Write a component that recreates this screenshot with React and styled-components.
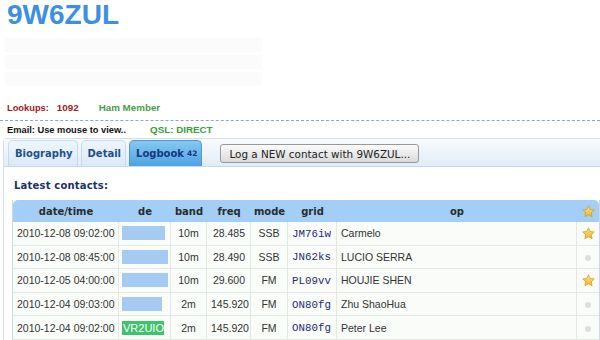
import React from "react";
import styled, { createGlobalStyle } from "styled-components";

const GlobalStyle = createGlobalStyle`
  body {
    margin: 0;
    background: #fff;
    font-family: "Liberation Sans", Arial, sans-serif;
  }
`;

const Page = styled.div`
  width: 600px;
  height: 340px;
  overflow: hidden;
`;

const Head = styled.div`
  padding-left: 7px;
`;

const Call = styled.h1`
  margin: 0;
  font: bold 28px/30px "Liberation Sans", Arial, sans-serif;
  color: #3d8fe4;
`;

const Blurb = styled.div`
  margin: 8px 0 0 -2px;
  width: 257px;
  display: flex;
  flex-direction: column;
  gap: 3px;
`;

const BlurLine = styled.div`
  height: 14px;
  background: #fbfbfc;
`;

const InfoRow = styled.div`
  display: flex;
  align-items: center;
  height: 14px;
  margin-top: ${(p) => p.top || 0}px;
  font: bold 9.3px/14px "Liberation Sans", Arial, sans-serif;
`;

const Label = styled.span`
  color: ${(p) => p.color || "#111"};
  margin-right: ${(p) => p.gap || 0}px;
  font-size: ${(p) => p.size || 9.3}px;
`;

const Divider = styled.div`
  margin-top: 5px;
  border-top: 1px dashed #8ea7c6;
`;

const Widget = styled.div`
  margin: 1px 0 0 3px;
  border: 1px solid #d4e1ec;
  border-right: 0;
  border-radius: 4px 0 0 0;
  height: 220px;
`;

const Nav = styled.div`
  display: flex;
  align-items: flex-end;
  height: 27px;
  padding-left: 4px;
  background: linear-gradient(#f9fbfe, #e1ecf6);
  border-bottom: 1px solid #c3d8ea;
`;

const Tab = styled.div`
  height: 25px;
  margin-right: 3px;
  padding: 0 4px 0 6px;
  display: flex;
  align-items: center;
  border: 1px solid ${(p) => (p.active ? "#4b9ad8" : "#c5dbec")};
  border-bottom: 0;
  border-radius: 5px 5px 0 0;
  background: ${(p) =>
    p.active
      ? "linear-gradient(#86c8f2, #4fa3e2)"
      : "linear-gradient(#eef6fd, #dbeaf8)"};
  color: ${(p) => (p.active ? "#123a7a" : "#1f4f8c")};
  font: bold 10px "DejaVu Sans", Verdana, sans-serif;
`;

const Count = styled.span`
  font-size: 7.5px;
  margin-left: 3px;
`;

const LogButton = styled.button`
  align-self: center;
  margin: 2px 0 0 15px;
  height: 19px;
  padding: 0 8px;
  border: 1px solid #989898;
  border-radius: 3px;
  background: linear-gradient(#fbfbfb, #dadada);
  color: #222;
  font: 10.4px "DejaVu Sans", Verdana, sans-serif;
`;

const Body = styled.div`
  padding: 12px 0 0 8px;
`;

const SubTitle = styled.div`
  height: 14px;
  padding-left: 2px;
  font: bold 10px/14px "DejaVu Sans", Verdana, sans-serif;
  color: #1b2f6b;
  letter-spacing: 0.2px;
`;

const Table = styled.table`
  margin-top: 7px;
  width: 586px;
  table-layout: fixed;
  border-collapse: separate;
  border-spacing: 0;
  border-left: 1px solid #cbd9e6;
  border-right: 1px solid #cbd9e6;
`;

const Th = styled.th`
  height: 22px;
  padding: 0;
  background: #a3cef6;
  color: #2b2b2b;
  font: bold 10px "DejaVu Sans", Verdana, sans-serif;
  text-align: center;
  &:first-child { border-top-left-radius: 5px; }
  &:last-child { border-top-right-radius: 5px; }
`;

const Td = styled.td`
  height: 22.6px;
  padding: 0 ${(p) => (p.align === "right" ? "5px" : "4px")} 0 4px;
  background: #f9fcf9;
  border-bottom: 1px solid #e2e8e2;
  border-right: 1px solid #e2e8e2;
  text-align: ${(p) => p.align || "left"};
  color: #333;
  font: 10.5px "Liberation Sans", Arial, sans-serif;
  white-space: nowrap;
  overflow: hidden;
  &:last-child { border-right: 0; }
`;

const DeCell = styled(Td)`
  padding: 0 3px;
`;

const Grid = styled.span`
  font: 10.8px "Liberation Mono", "Courier New", monospace;
  color: #1f2a78;
`;

const CallBar = styled.div`
  height: 14px;
  width: ${(p) => p.w}px;
  background: ${(p) => (p.green ? "#3ec26c" : "#a5cbf3")};
  color: #fff;
  font: 11px/14px "Liberation Sans", Arial, sans-serif;
  padding-left: 1px;
  box-sizing: border-box;
`;

const Dot = styled.span`
  display: inline-block;
  width: 6px;
  height: 6px;
  border-radius: 50%;
  background: #dedede;
  vertical-align: middle;
`;

const Star = () => (
  <svg width="13" height="13" viewBox="0 0 24 24" style={{ verticalAlign: "middle" }}>
    <defs>
      <linearGradient id="sg" x1="0" y1="0" x2="0" y2="1">
        <stop offset="0" stopColor="#fde58a" />
        <stop offset="1" stopColor="#f0b429" />
      </linearGradient>
    </defs>
    <path
      d="M12 1.5l3.2 6.9 7.4.8-5.5 5 1.6 7.4L12 17.8l-6.7 3.8 1.6-7.4-5.5-5 7.4-.8z"
      fill="url(#sg)"
      stroke="#d39a1c"
      strokeWidth="1.4"
      strokeLinejoin="round"
    />
  </svg>
);

const widths = [106, 52, 36, 44, 37, 49, 240, 22];

const rows = [
  ["2010-12-08 09:02:00", 43, "", "10m", "28.485", "SSB", "JM76iw", "Carmelo", true],
  ["2010-12-08 08:45:00", 46, "", "10m", "28.490", "SSB", "JN62ks", "LUCIO SERRA", false],
  ["2010-12-05 04:00:00", 46, "", "10m", "29.600", "FM", "PL09vv", "HOUJIE SHEN", true],
  ["2010-12-04 09:03:00", 40, "", "2m", "145.920", "FM", "ON80fg", "Zhu ShaoHua", false],
  ["2010-12-04 09:02:00", 42, "VR2UIO", "2m", "145.920", "FM", "ON80fg", "Peter Lee", false],
];

export default function App() {
  return (
    <Page>
      <GlobalStyle />
      <Head>
        <Call>9W6ZUL</Call>
        <Blurb>
          <BlurLine />
          <BlurLine />
          <BlurLine />
        </Blurb>
        <InfoRow top={15}>
          <Label color="#9c1c1c" gap={8}>Lookups:</Label>
          <Label color="#9c1c1c" gap={20} size={9.8}>1092</Label>
          <Label color="#4a9e4a" size={9.8}>Ham Member</Label>
        </InfoRow>
      </Head>
      <Divider />
      <Head>
        <InfoRow top={2}>
          <Label gap={24}>Email: Use mouse to view..</Label>
          <Label color="#36a336" size={9.8}>QSL: DIRECT</Label>
        </InfoRow>
      </Head>
      <Widget>
        <Nav>
          <Tab>Biography</Tab>
          <Tab>Detail</Tab>
          <Tab active>
            Logbook<Count>42</Count>
          </Tab>
          <LogButton>Log a NEW contact with 9W6ZUL...</LogButton>
        </Nav>
        <Body>
          <SubTitle>Latest contacts:</SubTitle>
          <Table>
            <colgroup>
              {widths.map((w, i) => (
                <col key={i} style={{ width: w }} />
              ))}
            </colgroup>
            <thead>
              <tr>
                <Th>date/time</Th>
                <Th>de</Th>
                <Th>band</Th>
                <Th>freq</Th>
                <Th>mode</Th>
                <Th>grid</Th>
                <Th>op</Th>
                <Th>
                  <Star />
                </Th>
              </tr>
            </thead>
            <tbody>
              {rows.map((r, i) => (
                <tr key={i}>
                  <Td>{r[0]}</Td>
                  <DeCell>
                    <CallBar w={r[1]} green={!!r[2]}>
                      {r[2]}
                    </CallBar>
                  </DeCell>
                  <Td align="center">{r[3]}</Td>
                  <Td align="right">{r[4]}</Td>
                  <Td align="center">{r[5]}</Td>
                  <Td>
                    <Grid>{r[6]}</Grid>
                  </Td>
                  <Td>{r[7]}</Td>
                  <Td align="center">{r[8] ? <Star /> : <Dot />}</Td>
                </tr>
              ))}
            </tbody>
          </Table>
        </Body>
      </Widget>
    </Page>
  );
}
